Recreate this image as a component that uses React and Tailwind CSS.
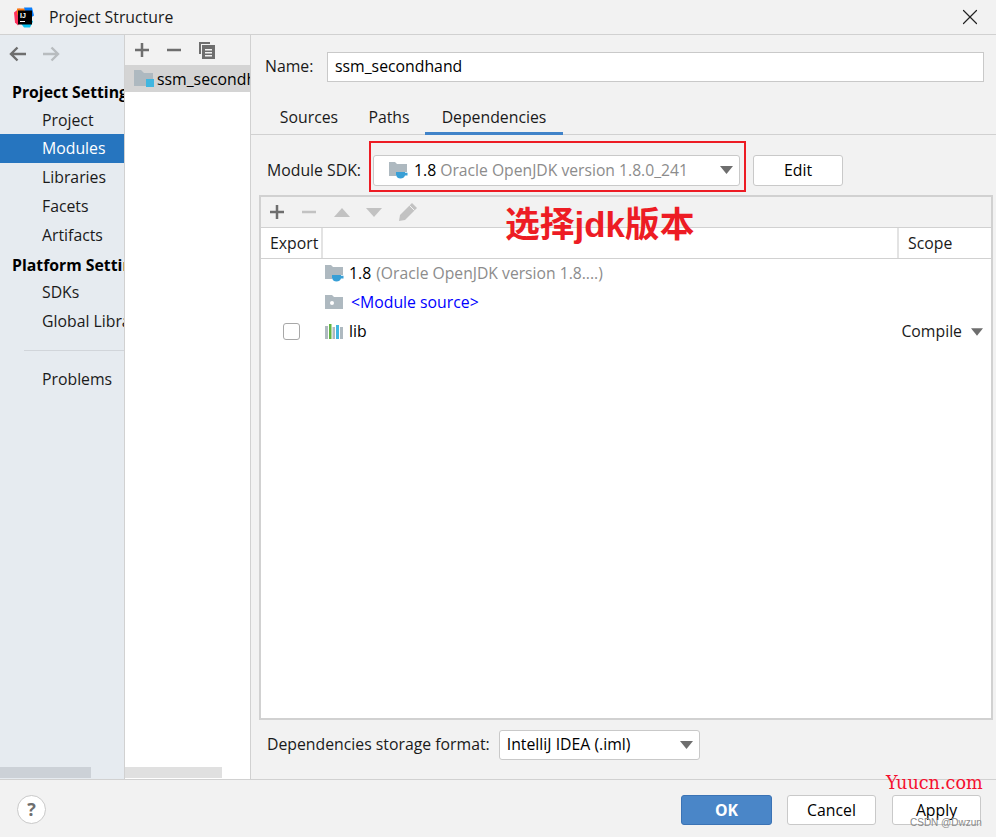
import { X } from "lucide-react";

const font = { fontFamily: '"Open Sans", "Noto Sans", "Noto Sans CJK SC", sans-serif' };

const SideItem = ({ label, active, short }) => (
  <div className={`${short ? "h-[28px] pt-[1px]" : "h-[29px]"} pl-[42px] flex items-center whitespace-nowrap ${active ? "bg-[#2675bf] text-white" : "text-[#1a1a1a]"}`}>
    {label}
  </div>
);

const SideHead = ({ label, low }) => (
  <div className={`h-[28px] pl-3 flex items-center whitespace-nowrap font-bold text-black ${low ? "pt-[3px]" : "pt-[1px]"}`}>{label}</div>
);

const Caret = ({ className = "" }) => (
  <svg width="13" height="8" viewBox="0 0 13 8" className={`shrink-0 ${className}`}>
    <path d="M0 0h13L6.500 8z" fill="#6e6e6e" />
  </svg>
);

const PlusIcon = ({ color = "#6e6e6e" }) => (
  <svg width="16" height="14" viewBox="0 0 16 14" className="shrink-0">
    <path d="M1 5.750h14v2.500H1zM6.750 0h2.500v14h-2.500z" fill={color} />
  </svg>
);

const MinusIcon = ({ color = "#6e6e6e" }) => (
  <svg width="16" height="14" viewBox="0 0 16 14" className="shrink-0">
    <path d="M1 5.750h14v2.500H1z" fill={color} />
  </svg>
);

const BackArrow = ({ color, flip }) => (
  <svg width="18" height="16" viewBox="0 0 18 16" className={`shrink-0 ${flip ? "rotate-180" : ""}`}>
    <path d="M17 8H2M8.500 1.500L2 8l6.500 6.500" fill="none" stroke={color} strokeWidth="2.400" />
  </svg>
);

const ModuleIcon = () => (
  <svg width="20" height="17" viewBox="0 0 20 17" className="shrink-0">
    <path d="M0 0h7l3 3h9v10H12v3H0z" fill="#aeb9c0" />
    <rect x="12" y="9" width="8" height="8" fill="#40b6e0" />
  </svg>
);

const SdkIcon = () => (
  <svg width="19" height="17" viewBox="0 0 19 17" className="shrink-0">
    <path d="M0 0h6l2 2h10v8H7v4H0z" fill="#aeb9c0" />
    <path d="M7 10h9v.800h2.500v2.700H16q-1 3-4.500 3T7 13z" fill="#389fd6" />
  </svg>
);

const SourceIcon = () => (
  <svg width="18" height="15" viewBox="0 0 18 15" className="shrink-0">
    <path d="M0 0h7l2 2h9v12H0z" fill="#aeb9c0" />
    <circle cx="7" cy="8" r="2" fill="#fff" />
  </svg>
);

const LibIcon = () => (
  <svg width="18" height="15" viewBox="0 0 18 15" className="shrink-0">
    <rect x="0" y="2" width="3" height="13" fill="#aeb9c0" />
    <rect x="4" y="0" width="2.500" height="15" fill="#62b543" />
    <rect x="7.500" y="3" width="2.500" height="12" fill="#aeb9c0" />
    <rect x="11" y="1" width="3" height="14" fill="#40b6e0" />
    <rect x="15" y="3" width="3" height="12" fill="#aeb9c0" />
  </svg>
);

const CopyIcon = () => (
  <svg width="16" height="17" viewBox="0 0 16 17" className="shrink-0 ml-px">
    <path d="M0 0h11v2H2v10H0z" fill="#6e6e6e" />
    <path d="M3 3h13v14H3z" fill="#6e6e6e" />
    <path d="M6 7h7v1.500H6zM6 10h7v1.500H6zM6 13h7v1.500H6z" fill="#f2f2f2" />
  </svg>
);

const PencilIcon = () => (
  <svg width="18" height="18" viewBox="0 0 18 18" className="shrink-0 ml-px">
    <path d="M13 0l5 5L6 17l-6 1 1-6z" fill="#c2c2c2" />
    <path d="M10.500 2.500l5 5" stroke="#f2f2f2" strokeWidth="1" />
  </svg>
);

const AppLogo = () => (
  <svg width="20" height="21" viewBox="0 0 20 20" className="shrink-0">
    <path d="M0 5l5-4 4 2-5 15-3-3z" fill="#fe315d" />
    <path d="M3 1h9L7 9 3 7z" fill="#f97a12" />
    <path d="M10 0h8l2 8-6 4z" fill="#087cfa" />
    <path d="M4 12l6 8h6l3-6-5-6z" fill="#07c3f2" />
    <rect x="4" y="3" width="14" height="14" fill="#000" />
    <rect x="6" y="13.500" width="5" height="1" fill="#fff" />
    <text x="6" y="10.500" fontSize="7" fontWeight="700" fill="#fff" fontFamily="Liberation Sans">IJ</text>
  </svg>
);

export default function App() {
  return (
    <div style={font} className="relative w-[996px] h-[837px] bg-[#f2f2f2] text-[15.8px] text-[#1a1a1a] overflow-hidden flex flex-col">
      {/* title bar */}
      <div className="h-[35px] shrink-0 flex items-center border-b border-[#d1d1d1] pl-[14px] pr-[13px]">
        <AppLogo />
        <span className="ml-[15px] pt-[1px]">Project Structure</span>
        <X className="ml-auto" size={26} strokeWidth={1.1} color="#222" />
      </div>

      <div className="flex-1 flex min-h-0">
        {/* left nav */}
        <div className="relative w-[125px] shrink-0 bg-[#e6ebf0] border-r border-[#d1d1d1] overflow-hidden">
          <div className="h-[38px] flex items-center pl-[9px] gap-[15px]">
            <BackArrow color="#6e6e6e" />
            <BackArrow color="#b8bcbf" flip />
          </div>
          <div className="pt-[5px]">
            <SideHead label="Project Settings" />
            <SideItem label="Project" short />
            <SideItem label="Modules" active />
            <SideItem label="Libraries" />
            <SideItem label="Facets" />
            <SideItem label="Artifacts" />
            <SideHead label="Platform Settings" low />
            <SideItem label="SDKs" />
            <SideItem label="Global Libraries" />
            <div className="h-[29px] flex items-center pl-[24px]">
              <div className="h-px w-full bg-[#d1d5da]" />
            </div>
            <SideItem label="Problems" />
          </div>
          <div className="absolute left-0 bottom-[1px] w-[91px] h-[11px] bg-[#ccd1d7]" />
        </div>

        {/* module list */}
        <div className="relative w-[126px] shrink-0 bg-white border-r border-[#d1d1d1] overflow-hidden">
          <div className="h-[30px] bg-[#f2f2f2] flex items-center pl-[9px] gap-[16px]">
            <PlusIcon />
            <MinusIcon />
            <CopyIcon />
          </div>
          <div className="h-[27px] bg-[#d4d4d4] flex items-center pl-[9px] gap-[3px] whitespace-nowrap">
            <ModuleIcon />
            <span className="text-black pt-[2px]">ssm_secondhand</span>
          </div>
          <div className="absolute left-0 bottom-[1px] w-[97px] h-[11px] bg-[#e0e0e0]" />
        </div>

        {/* detail */}
        <div className="flex-1 flex flex-col min-w-0">
          <div className="h-[68px] shrink-0 flex items-center pl-[14px] pr-[12px] pb-[5px]">
            <span className="w-[62px]">Name:</span>
            <div className="flex-1 h-[30px] bg-white border border-[#c9c9c9] flex items-center pl-[7px] text-black">ssm_secondhand</div>
          </div>
          <div className="h-[32px] shrink-0 flex border-b border-[#d1d1d1] pl-[14px]">
            <div className="w-[88px] text-center leading-[28px]">Sources</div>
            <div className="w-[72px] text-center leading-[28px]">Paths</div>
            <div className="w-[138px] text-center leading-[28px] border-b-[3px] border-[#4083c9] h-[32px]">Dependencies</div>
          </div>

          <div className="h-[60px] shrink-0 flex items-center pl-[16px] pt-[10px]">
            <span className="w-[106px] whitespace-nowrap pt-[1px]">Module SDK:</span>
            <div className="w-[367px] h-[31px] bg-white border border-[#c9c9c9] rounded-[3px] flex items-center pl-[15px] pr-[6px]">
              <SdkIcon />
              <span className="ml-[6px] pt-[1px] text-black">1.8</span>
              <span className="ml-[4px] pt-[1px] text-[#8c8c8c] text-[15.7px]">Oracle OpenJDK version 1.8.0_241</span>
              <Caret className="ml-auto" />
            </div>
            <div className="ml-[13px] w-[90px] h-[31px] bg-white border border-[#c9c9c9] rounded-[3px] flex items-center justify-center pt-[1px] text-black">Edit</div>
          </div>

          {/* dependencies table */}
          <div className="w-[734px] ml-[8px] h-[525px] shrink-0 border-2 border-[#d1d1d1] bg-white flex flex-col">
            <div className="h-[31px] shrink-0 bg-[#f2f2f2] border-b border-[#d1d1d1] flex items-center pl-[8px] gap-[16px]">
              <PlusIcon />
              <MinusIcon color="#c2c2c2" />
              <svg width="16" height="9" viewBox="0 0 16 9" className="shrink-0 ml-px"><path d="M8 0l8 9H0z" fill="#c2c2c2" /></svg>
              <svg width="16" height="9" viewBox="0 0 16 9" className="shrink-0"><path d="M0 0h16L8 9z" fill="#c2c2c2" /></svg>
              <PencilIcon />
            </div>
            <div className="h-[31px] shrink-0 border-b border-[#d1d1d1] flex items-center">
              <div className="w-[62px] h-full border-r-2 border-[#e3e3e3] pl-[9px] pt-[1px] flex items-center">Export</div>
              <div className="w-[576px] h-full border-r-2 border-[#e3e3e3]" />
              <div className="pl-[9px] pt-[1px]">Scope</div>
            </div>
            <div>
              <div className="h-[29px] flex items-center pl-[64px]">
                <SdkIcon />
                <span className="ml-[5px] text-black">1.8</span>
                <span className="ml-[5px] text-[#8c8c8c] text-[15.7px]">(Oracle OpenJDK version 1.8....)</span>
              </div>
              <div className="h-[29px] flex items-center pl-[64px]">
                <SourceIcon />
                <span className="ml-[8px] text-[#0000ff]">&lt;Module source&gt;</span>
              </div>
              <div className="h-[29px] flex items-center">
                <div className="ml-[22px] w-[17px] h-[17px] bg-white border border-[#a8a8a8] rounded-[3px]" />
                <div className="ml-[25px]"><LibIcon /></div>
                <span className="ml-[6px] text-black">lib</span>
                <span className="ml-auto text-[#1a1a1a]">Compile</span>
                <Caret className="ml-[9px] mr-[8px] w-[12px]" />
              </div>
            </div>
          </div>

          <div className="flex-1 flex items-center pl-[16px] pb-[10px]">
            <span className="whitespace-nowrap pt-[1px]">Dependencies storage format:</span>
            <div className="ml-[9px] w-[201px] h-[30px] bg-white border border-[#c9c9c9] rounded-[3px] flex items-center pl-[7px] pr-[6px] pt-[1px] text-black">
              IntelliJ IDEA (.iml)
              <Caret className="ml-auto" />
            </div>
          </div>
        </div>
      </div>

      {/* footer */}
      <div className="h-[58px] shrink-0 border-t border-[#d1d1d1] flex items-center pl-[17px] pt-[2px]">
        <div className="w-[29px] h-[29px] rounded-full bg-white border border-[#c9c9c9] flex items-center justify-center font-bold text-[18px] text-[#6e6e6e]">?</div>
        <div className="ml-auto flex gap-[15px] pr-[15px]">
          <div className="w-[91px] h-[30px] bg-[#4a86c8] border border-[#3b73b5] rounded-[3px] flex items-center justify-center pt-[2px] text-white font-bold">OK</div>
          <div className="w-[89px] h-[30px] bg-white border border-[#c9c9c9] rounded-[3px] flex items-center justify-center pt-[2px] text-black">Cancel</div>
          <div className="w-[89px] ml-px h-[30px] bg-white border border-[#c9c9c9] rounded-[3px] flex items-center justify-center pt-[2px] text-black">Apply</div>
        </div>
      </div>

      {/* annotations on top of the screenshot */}
      <div className="absolute left-[369px] top-[141px] w-[377px] h-[51px] border-2 border-[#ed1c24]" />
      <div className="absolute left-[505px] top-[203px] text-[34.8px] leading-[44px] font-bold text-[#ed1c24] whitespace-nowrap" style={{ fontFamily: '"Liberation Sans", "Noto Sans CJK SC", sans-serif' }}>选择jdk版本</div>
      <div className="absolute left-[886px] top-[773px] text-[17.6px] leading-[20px] text-[#f5102f] whitespace-nowrap" style={{ fontFamily: '"DejaVu Serif", serif' }}>Yuucn.com</div>
      <div className="absolute left-[910px] top-[816px] text-[10px] leading-[14px] text-[#8a8a8a] whitespace-nowrap" style={{ fontFamily: '"Liberation Sans", sans-serif' }}>CSDN @Dwzun</div>
    </div>
  );
}
